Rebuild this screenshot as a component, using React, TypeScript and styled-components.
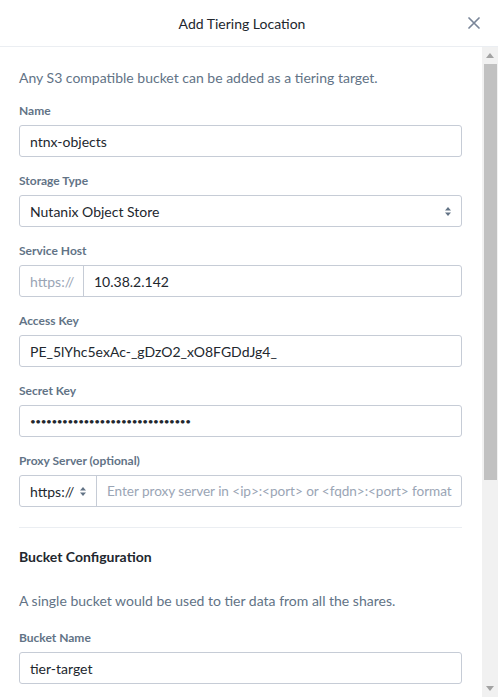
import React from 'react';
import styled, { createGlobalStyle } from 'styled-components';

const GlobalStyle = createGlobalStyle`
    html, body {
        margin: 0;
        padding: 0;
        background: #ffffff;
        overflow: hidden;
    }
    body {
        font-family: Lato, 'Open Sans', sans-serif;
        color: #22272e;
    }
    * {
        box-sizing: border-box;
    }
`;

const Modal = styled.div`
    width: 498px;
    height: 697px;
    display: flex;
    flex-direction: column;
    background: #fff;
`;

const Header = styled.div`
    height: 47px;
    flex: none;
    display: flex;
    align-items: center;
    justify-content: center;
    padding-right: 14px;
    position: relative;
    border-bottom: 1px solid #ebeef2;
`;

const Title = styled.h2`
    margin: 0;
    font-size: 14px;
    font-weight: 400;
    color: #22272e;
`;

const CloseButton = styled.button`
    position: absolute;
    right: 15px;
    top: 14px;
    width: 18px;
    height: 18px;
    padding: 0;
    border: none;
    background: none;
    display: flex;
    align-items: center;
    justify-content: center;
    cursor: pointer;
`;

const BodyRow = styled.div`
    flex: 1;
    min-height: 0;
    display: flex;
`;

const Body = styled.div`
    flex: 1;
    overflow: hidden;
    padding: 21px 20px 24px 19px;
`;

const ScrollBar = styled.div`
    width: 16px;
    flex: none;
    background: #f1f1f1;
    display: flex;
    flex-direction: column;
`;

const ScrollButton = styled.div`
    height: 17px;
    flex: none;
    display: flex;
    align-items: center;
    justify-content: center;
`;

const ScrollTrack = styled.div`
    flex: 1;
    padding: 0 1px 0 2px;
`;

const ScrollThumb = styled.div`
    background: #c1c1c1;
`;

const Description = styled.p<{ $gap?: number }>`
    margin: 0 0 ${(p) => p.$gap ?? 16}px;
    font-size: 14px;
    line-height: 20px;
    color: #627386;
`;

const Field = styled.div`
    display: flex;
    flex-direction: column;
    margin-bottom: 17px;
`;

const Label = styled.label`
    font-size: 12px;
    font-weight: 700;
    color: #627386;
    line-height: 14px;
    margin-bottom: 7px;
`;

const InputBox = styled.div`
    height: 32px;
    border: 1px solid #c6ccd6;
    border-radius: 3px;
    display: flex;
    align-items: stretch;
    overflow: hidden;
    background: #fff;
`;

const Segment = styled.div<{ $muted?: boolean; $grow?: boolean; $width?: number }>`
    display: flex;
    align-items: center;
    padding: 0 10px;
    font-size: 14px;
    color: ${(p) => (p.$muted ? '#9aa5b5' : '#22272e')};
    flex: ${(p) => (p.$grow ? '1' : 'none')};
    width: ${(p) => (p.$width ? `${p.$width}px` : 'auto')};
    white-space: nowrap;
    overflow: hidden;
    & + & {
        border-left: 1px solid #c6ccd6;
    }
`;

const Placeholder = styled.span`
    font-size: 13.6px;
    letter-spacing: -0.05px;
`;

const Caret = styled.span`
    margin-left: auto;
    display: flex;
    align-items: center;
`;

const Dots = styled.span`
    font-size: 10px;
    letter-spacing: -0.45px;
`;

const Divider = styled.hr`
    border: none;
    border-top: 1px solid #ebeef2;
    margin: 20px 0 20px;
`;

const SectionTitle = styled.h3`
    margin: 0 0 25px;
    font-size: 14px;
    font-weight: 700;
    color: #22272e;
    line-height: 18px;
`;

const SelectArrows = () => (
    <svg width="6" height="9" viewBox="0 0 6 9">
        <path d="M3 0 L6 3.5 H0 Z" fill="#627386" />
        <path d="M3 9 L6 5.5 H0 Z" fill="#627386" />
    </svg>
);

const CloseIcon = () => (
    <svg width="12" height="12" viewBox="0 0 12 12">
        <path
            d="M1 1 L11 11 M11 1 L1 11"
            stroke="#7a8699"
            strokeWidth="1.7"
            strokeLinecap="round"
        />
    </svg>
);

const ScrollArrow = ({ down }: { down?: boolean }) => (
    <svg width="8" height="5" viewBox="0 0 8 5">
        <path d={down ? 'M0 0 H8 L4 5 Z' : 'M4 0 L8 5 H0 Z'} fill="#a3a3a3" />
    </svg>
);

type TextFieldProps = { label: string; value?: string; placeholder?: string };

const TextField = ({ label, value, placeholder }: TextFieldProps) => (
    <Field>
        <Label>{label}</Label>
        <InputBox>
            <Segment $grow $muted={!value}>
                {value || placeholder}
            </Segment>
        </InputBox>
    </Field>
);

// the scroll area is drawn, headless browser hides native scrollbars
const thumb = { top: 0, height: 416 };

export default function App() {
    return (
        <Modal>
            <GlobalStyle />
            <Header>
                <Title>Add Tiering Location</Title>
                <CloseButton aria-label="Close">
                    <CloseIcon />
                </CloseButton>
            </Header>
            <BodyRow>
                <Body>
                    <Description>
                        Any S3 compatible bucket can be added as a tiering target.
                    </Description>
                    <TextField label="Name" value="ntnx-objects" />
                    <Field>
                        <Label>Storage Type</Label>
                        <InputBox>
                            <Segment $grow>
                                Nutanix Object Store
                                <Caret>
                                    <SelectArrows />
                                </Caret>
                            </Segment>
                        </InputBox>
                    </Field>
                    <Field>
                        <Label>Service Host</Label>
                        <InputBox>
                            <Segment $muted $width={63}>
                                https://
                            </Segment>
                            <Segment $grow>10.38.2.142</Segment>
                        </InputBox>
                    </Field>
                    <TextField
                        label="Access Key"
                        value="PE_5lYhc5exAc-_gDzO2_xO8FGDdJg4_"
                    />
                    <Field>
                        <Label>Secret Key</Label>
                        <InputBox>
                            <Segment $grow>
                                <Dots>••••••••••••••••••••••••••••••</Dots>
                            </Segment>
                        </InputBox>
                    </Field>
                    <Field>
                        <Label>Proxy Server (optional)</Label>
                        <InputBox>
                            <Segment $width={76}>
                                https://
                                <Caret>
                                    <SelectArrows />
                                </Caret>
                            </Segment>
                            <Segment $grow $muted>
                                <Placeholder>
                                    Enter proxy server in &lt;ip&gt;:&lt;port&gt; or
                                    &lt;fqdn&gt;:&lt;port&gt; format
                                </Placeholder>
                            </Segment>
                        </InputBox>
                    </Field>
                    <Divider />
                    <SectionTitle>Bucket Configuration</SectionTitle>
                    <Description $gap={20}>
                        A single bucket would be used to tier data from all the shares.
                    </Description>
                    <TextField label="Bucket Name" value="tier-target" />
                </Body>
                <ScrollBar>
                    <ScrollButton>
                        <ScrollArrow />
                    </ScrollButton>
                    <ScrollTrack>
                        <ScrollThumb
                            style={{ marginTop: thumb.top, height: thumb.height }}
                        />
                    </ScrollTrack>
                    <ScrollButton>
                        <ScrollArrow down />
                    </ScrollButton>
                </ScrollBar>
            </BodyRow>
        </Modal>
    );
}
